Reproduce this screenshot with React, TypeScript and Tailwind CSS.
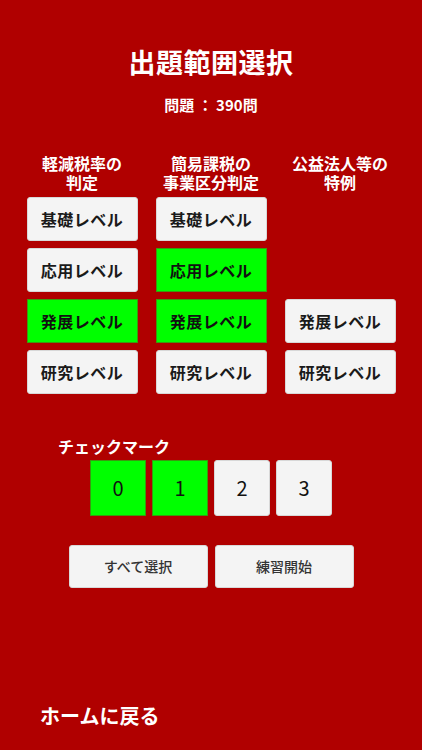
import React from "react";

const font = { fontFamily: '"Noto Sans CJK JP", "Noto Sans", sans-serif' };
const headerFont = { fontFamily: '"Liberation Sans", "Noto Sans CJK JP", sans-serif' };

function LevelButton({ label, on }: { label: string; on: boolean }) {
  return on ? (
    <div className="h-[44px] w-[111px] flex items-center justify-center bg-[#00ff00] border border-[#3a9a10] text-[16px] font-semibold text-[#111] tracking-[0.5px]">
      {label}
    </div>
  ) : (
    <div className="h-[44px] w-[111px] flex items-center justify-center bg-[#f4f4f4] border border-[#d8d8d8] rounded-[3px] text-[16px] font-semibold text-[#1a1a1a] tracking-[0.5px]">
      {label}
    </div>
  );
}

export default function App() {
  const cols: { header: string[]; items: ({ label: string; on: boolean } | null)[] }[] = [
    {
      header: ["軽減税率の", "判定"],
      items: [
        { label: "基礎レベル", on: false },
        { label: "応用レベル", on: false },
        { label: "発展レベル", on: true },
        { label: "研究レベル", on: false },
      ],
    },
    {
      header: ["簡易課税の", "事業区分判定"],
      items: [
        { label: "基礎レベル", on: false },
        { label: "応用レベル", on: true },
        { label: "発展レベル", on: true },
        { label: "研究レベル", on: false },
      ],
    },
    {
      header: ["公益法人等の", "特例"],
      items: [null, null, { label: "発展レベル", on: false }, { label: "研究レベル", on: false }],
    },
  ];
  const marks = [
    { n: "0", on: true },
    { n: "1", on: true },
    { n: "2", on: false },
    { n: "3", on: false },
  ];
  return (
    <div className="w-full h-[750px] bg-[#b00000] flex flex-col items-center overflow-hidden" style={font}>
      <div className="mt-[46px] text-[27px] leading-[32px] font-semibold text-white tracking-[0.5px]">出題範囲選択</div>
      <div className="mt-[17px] text-[15px] leading-[20px] font-semibold text-white">問題 ： 390問</div>

      <div className="mt-[41px] grid grid-cols-[111px_111px_111px] gap-x-[18px]" style={headerFont}>
        {cols.map((c, i) => (
          <div key={i} className="flex flex-col items-center text-white font-bold text-[16px] leading-[18.5px]">
            <span>{c.header[0]}</span>
            <span>{c.header[1]}</span>
          </div>
        ))}
      </div>

      <div className="mt-[4px] grid grid-cols-[111px_111px_111px] grid-rows-[44px_44px_44px_44px] gap-x-[18px] gap-y-[7px] grid-flow-col">
        {cols.map((c, i) =>
          c.items.map((it, j) =>
            it ? <LevelButton key={`${i}-${j}`} label={it.label} on={it.on} /> : <div key={`${i}-${j}`} />
          )
        )}
      </div>

      <div className="mt-[42px] self-stretch pl-[58px] text-white text-[16px] leading-[20px] font-semibold">チェックマーク</div>

      <div className="mt-[4px] flex gap-[6px]">
        {marks.map((m) =>
          m.on ? (
            <div key={m.n} className="w-[56px] h-[56px] flex items-center justify-center bg-[#00ff00] border border-[#3a9a10] text-[20px] text-[#111]">
              {m.n}
            </div>
          ) : (
            <div key={m.n} className="w-[56px] h-[56px] flex items-center justify-center bg-[#f4f4f4] border border-[#d8d8d8] rounded-[3px] text-[20px] text-[#111]">
              {m.n}
            </div>
          )
        )}
      </div>

      <div className="mt-[29px] flex gap-[7px]">
        <div className="w-[139px] h-[43px] flex items-center justify-center bg-[#f4f4f4] border border-[#d8d8d8] rounded-[3px] text-[14px] font-medium text-[#333]">
          すべて選択
        </div>
        <div className="w-[139px] h-[43px] flex items-center justify-center bg-[#f4f4f4] border border-[#d8d8d8] rounded-[3px] text-[14px] font-medium text-[#333]">
          練習開始
        </div>
      </div>

      <div className="mt-[116px] self-stretch pl-[40px] text-white text-[20px] leading-[24px] font-semibold">ホームに戻る</div>
    </div>
  );
}
